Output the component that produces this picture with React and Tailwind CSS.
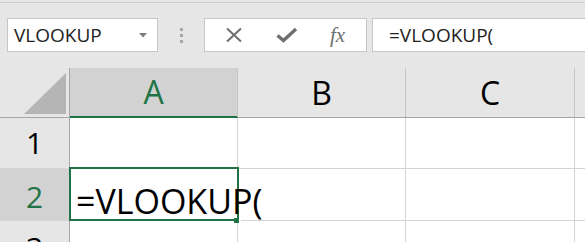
import React from "react";

function Cell({ className = "", children }) {
    return (
        <div className={`h-full shrink-0 border-r border-[#d4d4d4] ${className}`}>{children}</div>
    );
}

export default function App() {
    return (
        <div className="w-[585px] h-[242px] overflow-hidden bg-[#e6e6e6] font-['Open_Sans',sans-serif] text-black">
            {/* Top edge */}
            <div className="h-[2px]" />
            <div className="h-px bg-[#d0ccc6]" />

            {/* Name box + formula bar */}
            <div className="flex h-[34px] mt-[15px] pl-[7px]">
                <div className="w-[151px] h-full bg-white border border-[#c6c6c6] flex items-center justify-between pl-[6px] pr-[10px]">
                    <span className="text-[19px] leading-none text-[#222]">VLOOKUP</span>
                    <svg width="8" height="5" viewBox="0 0 8 5">
                        <polygon points="0,0 8,0 4,4.5" fill="#7a7a7a" />
                    </svg>
                </div>

                <div className="w-[46px] flex flex-col items-center justify-center gap-[3px]">
                    <span className="w-[3px] h-[3px] bg-[#a6a6a6]" />
                    <span className="w-[3px] h-[3px] bg-[#a6a6a6]" />
                    <span className="w-[3px] h-[3px] bg-[#a6a6a6]" />
                </div>

                <div className="w-[163px] h-full bg-white border border-[#c6c6c6] flex items-center">
                    <div className="w-[56px] flex justify-center pl-[2px]">
                        <svg width="18" height="16" viewBox="0 0 18 16">
                            <path d="M2 1.5 L16 14.5 M16 1.5 L2 14.5" stroke="#6f6f6f" strokeWidth="2" fill="none" />
                        </svg>
                    </div>
                    <div className="w-[52px] flex justify-center">
                        <svg width="22" height="16" viewBox="0 0 22 16">
                            <path d="M1.5 8.5 L7.5 13.5 L20 2" stroke="#6f6f6f" strokeWidth="3.5" fill="none" />
                        </svg>
                    </div>
                    <div className="flex-1 flex justify-center pr-[4px]">
                        <span className="font-['Liberation_Serif',serif] italic text-[21px] leading-none text-[#6f6f6f]">fx</span>
                    </div>
                </div>

                <div className="flex-1 ml-[5px] h-full bg-white border-y border-l border-[#c6c6c6] flex items-center pl-[16px]">
                    <span className="text-[19px] leading-none text-[#222]">=VLOOKUP(</span>
                </div>
            </div>

            <div className="h-[16px]" />

            {/* Column headers */}
            <div className="flex h-[50px] border-b border-[#a6a6a6]">
                <div className="w-[70px] h-full shrink-0 border-r border-[#a6a6a6] flex items-end justify-end pr-[3px] pb-[3px]">
                    <svg width="42" height="41" viewBox="0 0 42 41">
                        <polygon points="0,41 42,41 42,0" fill="#b5b5b5" />
                    </svg>
                </div>
                <div className="relative w-[168px] h-[50px] shrink-0 bg-[#d2d2d2] border-r border-[#c6c6c6] border-b-2 border-b-[#217346] flex items-center justify-center text-[32px] leading-none text-[#217346]">
                    A
                </div>
                <div className="w-[168px] h-full shrink-0 border-r border-[#c6c6c6] flex items-center justify-center text-[32px] leading-none">
                    B
                </div>
                <div className="w-[169px] h-full shrink-0 border-r border-[#c6c6c6] flex items-center justify-center text-[32px] leading-none">
                    C
                </div>
                <div className="flex-1" />
            </div>

            {/* Row 1 */}
            <div className="flex h-[51px] border-b border-[#d4d4d4] bg-white">
                <div className="w-[70px] h-full shrink-0 bg-[#e6e6e6] border-r border-[#a6a6a6] flex items-center justify-center text-[30px] leading-none">
                    1
                </div>
                <Cell className="w-[168px]" />
                <Cell className="w-[168px]" />
                <Cell className="w-[169px]" />
                <div className="flex-1" />
            </div>

            {/* Row 2 */}
            <div className="flex h-[52px] border-b border-[#d4d4d4] bg-white">
                <div className="w-[70px] h-full shrink-0 bg-[#d2d2d2] border-r border-[#a6a6a6] flex items-center justify-center pt-[4px] text-[30px] leading-none text-[#217346]">
                    2
                </div>
                <div className="relative z-10 w-[168px] h-full shrink-0">
                    <div className="absolute -top-[2px] -left-[1px] -right-[1px] -bottom-[1px] border-2 border-[#217346]" />
                    <div className="absolute -right-[3px] -bottom-[3px] w-[7px] h-[5px] bg-[#217346] border-r-2 border-white" />
                    <div className="absolute left-[6px] bottom-[2px] whitespace-nowrap text-[34px] leading-none">
                        =VLOOKUP(
                    </div>
                </div>
                <Cell className="w-[168px]" />
                <Cell className="w-[169px]" />
                <div className="flex-1" />
            </div>

            {/* Row 3 */}
            <div className="flex h-[40px] bg-white">
                <div className="w-[70px] h-full shrink-0 bg-[#e6e6e6] border-r border-[#a6a6a6] flex items-start justify-center pt-[12px] text-[30px] leading-none">
                    3
                </div>
                <Cell className="w-[168px]" />
                <Cell className="w-[168px]" />
                <Cell className="w-[169px]" />
                <div className="flex-1" />
            </div>
        </div>
    );
}
